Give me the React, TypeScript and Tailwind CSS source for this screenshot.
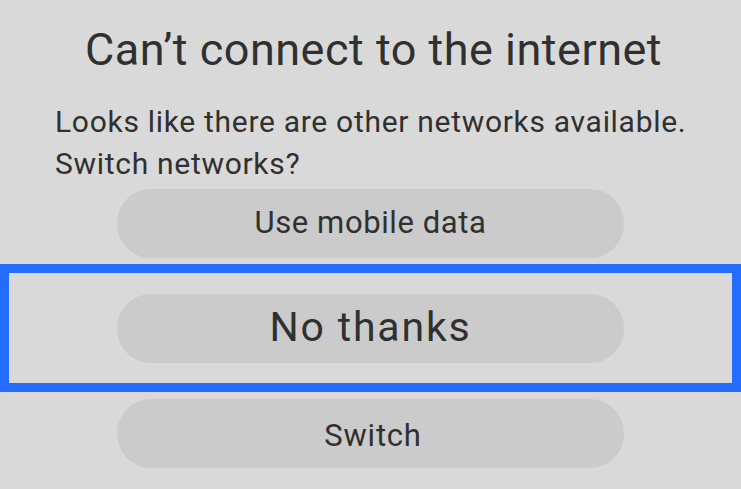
export default function App() {
  return (
    <div
      className="w-[741px] h-[489px] bg-[#d9d9d9] text-[#303030] flex flex-col overflow-hidden"
      style={{ fontFamily: 'Roboto, "Noto Sans", sans-serif' }}
    >
      <h1 className="pt-[24px] text-center text-[45px] leading-[52px] font-normal tracking-[0.5px] pl-[6px]">
        Can’t connect to the internet
      </h1>
      <p className="mt-[25px] pl-[55px] text-[30px] leading-[42px] tracking-[0.7px]">
        Looks like there are other networks available.
        <br />
        Switch networks?
      </p>
      <div className="mt-[4px] flex justify-center">
        <button className="w-[507px] h-[69px] rounded-[34px] bg-[#cbcbcb] text-[31px] tracking-[0.6px]">
          Use mobile data
        </button>
      </div>
      <div className="mt-[6px] h-[128px] border-[9px] border-[#246bff] flex items-center justify-center">
        <button className="w-[507px] h-[69px] rounded-[34px] bg-[#cbcbcb] text-[41px] tracking-[1.8px]">
          No thanks
        </button>
      </div>
      <div className="mt-[7px] flex justify-center">
        <button className="w-[507px] h-[69px] rounded-[34px] bg-[#cbcbcb] text-[31px] tracking-[0.8px] pt-[6px] pl-[5px]">
          Switch
        </button>
      </div>
    </div>
  );
}
